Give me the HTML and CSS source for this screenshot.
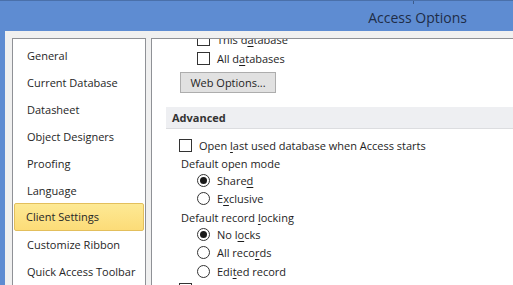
FILE: index.html
```html
<!DOCTYPE html>
<html>
<head>
<meta charset="utf-8">
<link rel="stylesheet" href="styles.css">
</head>
<body>
<div class="window">
  <div class="titlebar"><span class="title">Access Options</span></div>
  <div class="main">
    <nav class="nav">
      <div class="nav-item">General</div>
      <div class="nav-item">Current Database</div>
      <div class="nav-item">Datasheet</div>
      <div class="nav-item">Object Designers</div>
      <div class="nav-item">Proofing</div>
      <div class="nav-item">Language</div>
      <div class="nav-item selected">Client Settings</div>
      <div class="nav-item">Customize Ribbon</div>
      <div class="nav-item">Quick Access Toolbar</div>
    </nav>
    <section class="content">
      <div class="scroll">
        <div class="row indent2 h19"><span class="cb"></span><span>This d<u>a</u>tabase</span></div>
        <div class="row indent2 h19"><span class="cb"></span><span>All d<u>a</u>tabases</span></div>
        <div class="btn-row"><button class="btn">Web Options...</button></div>
        <div class="section-head">Advanced</div>
        <div class="row indent1 first"><span class="cb"></span><span>Open <u>l</u>ast used database when Access starts</span></div>
        <div class="row label"><span>Default open mode</span></div>
        <div class="row indent2 h17"><span class="rb on"></span><span>Share<u>d</u></span></div>
        <div class="row indent2 h19"><span class="rb"></span><span>E<u>x</u>clusive</span></div>
        <div class="row label"><span>Default record <u>l</u>ocking</span></div>
        <div class="row indent2 h17"><span class="rb on"></span><span>No l<u>o</u>cks</span></div>
        <div class="row indent2 h19"><span class="rb"></span><span>All reco<u>r</u>ds</span></div>
        <div class="row indent2 h19"><span class="rb"></span><span>Edi<u>t</u>ed record</span></div>
        <div class="row indent1 last"><span class="cb"></span><span>Use legacy encryption</span></div>
      </div>
    </section>
  </div>
</div>
</body>
</html>
```

FILE: styles.css
```css
html, body {
  margin: 0;
  padding: 0;
}
body {
  width: 513px;
  height: 285px;
  overflow: hidden;
  font-family: "Open Sans", "Noto Sans", sans-serif;
  font-size: 11px;
  color: #1e1e1e;
}
.window {
  display: flex;
  flex-direction: column;
  height: 285px;
  background: #5e8cd2;
}
.titlebar {
  position: relative;
  box-sizing: border-box;
  height: 31px;
  border-top: 1px solid #4a70aa;
  display: flex;
  align-items: center;
  justify-content: flex-end;
  padding-right: 46px;
}
.titlebar::after {
  content: "";
  position: absolute;
  left: 413px;
  top: 0;
  width: 1px;
  height: 3px;
  background: #3d5b8a;
}
.title {
  font-size: 14px;
  color: #1f2d47;
  padding-top: 2px;
}
.main {
  flex: 1;
  display: flex;
  gap: 5px;
  background: #f0f0f0;
  margin-left: 5px;
  padding: 7px 0 0 7px;
  min-height: 0;
}
.nav {
  width: 130px;
  flex: none;
  background: #fff;
  border: 1px solid #8f9196;
  border-bottom: none;
  padding: 3px 1px 0;
}
.nav-item {
  height: 27px;
  line-height: 25px;
  padding-left: 12px;
  color: #262626;
  white-space: nowrap;
  box-sizing: border-box;
  border: 1px solid transparent;
  border-radius: 2px;
}
.nav-item.selected {
  background: linear-gradient(#fde994, #fcdc78);
  border-color: #e3bf5c;
  padding-left: 11px;
  height: 28px;
  line-height: 26px;
  margin-top: -1px;
}
.content {
  flex: 1;
  min-width: 0;
  background: #fff;
  border: 1px solid #8f9196;
  border-right: none;
  border-bottom: none;
  overflow: hidden;
}
.scroll {
  margin-top: -9px;
  padding-left: 14px;
}
.row {
  display: flex;
  align-items: center;
  height: 18px;
  white-space: nowrap;
  gap: 7px;
}
.row.h17 { height: 17px; }
.row.h19 { height: 19px; }
.row.first { margin-top: 7px; }
.row.last { margin-top: 2px; align-items: flex-start; }
.indent1 { padding-left: 13px; }
.indent2 { padding-left: 31px; }
.label { padding-left: 15px; }
.row u { text-decoration-thickness: 1px; text-underline-offset: 2px; }
.cb {
  width: 11px;
  height: 11px;
  border: 1px solid #333;
  background: #fff;
  flex: none;
}
.rb {
  width: 11px;
  height: 11px;
  border: 1px solid #333;
  border-radius: 50%;
  background: #fff;
  flex: none;
  display: flex;
  align-items: center;
  justify-content: center;
}
.rb.on::after {
  content: "";
  width: 7px;
  height: 7px;
  border-radius: 50%;
  background: #1a1a1a;
}
.btn-row {
  padding: 4px 0 0 14px;
  height: 21px;
}
.btn {
  font: inherit;
  color: #1e1e1e;
  height: 21px;
  width: 96px;
  padding: 0;
  background: #e1e1e1;
  border: 1px solid #adadad;
  border-radius: 0;
}
.section-head {
  margin-top: 14px;
  box-sizing: border-box;
  height: 22px;
  line-height: 21px;
  background: #eeeff2;
  border-bottom: 1px solid #dcdde0;
  padding-left: 6px;
  font-weight: bold;
  color: #333;
}
```
